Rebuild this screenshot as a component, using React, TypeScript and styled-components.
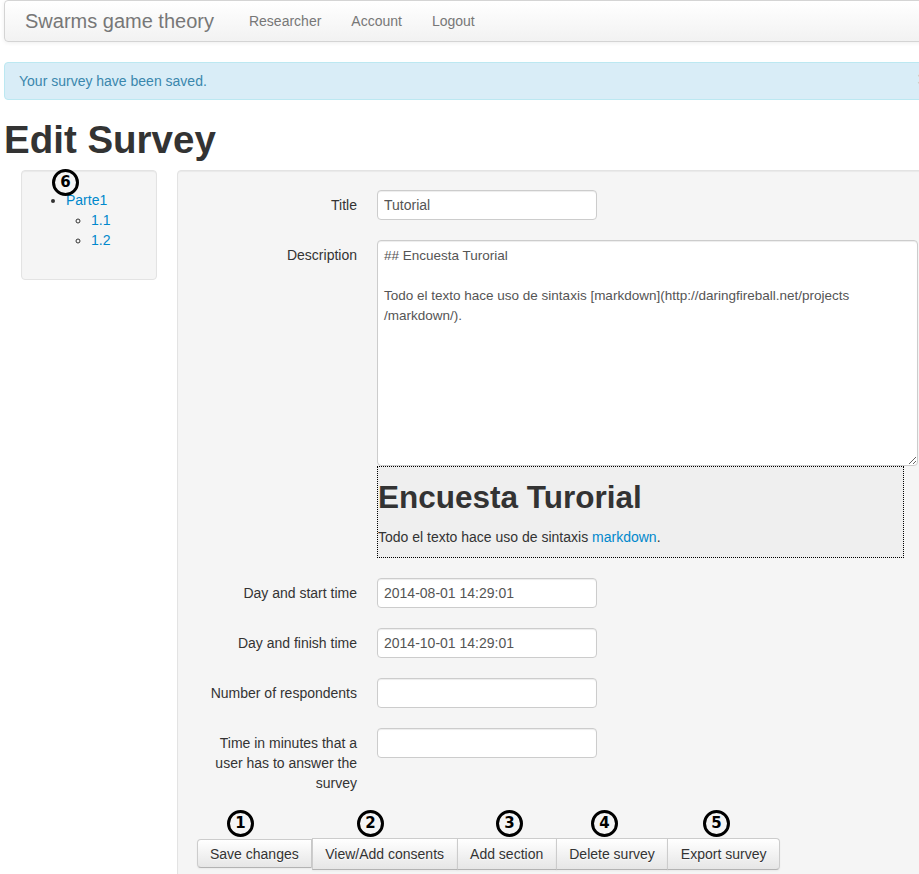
import React from "react";
import styled, { createGlobalStyle } from "styled-components";

const GlobalStyle = createGlobalStyle`
  html, body {
    margin: 0;
    padding: 0;
    overflow: hidden;
    background: #fff;
  }
  body {
    font-family: "Liberation Sans", Arial, sans-serif;
    font-size: 14px;
    line-height: 20px;
    color: #333;
  }
  * { box-sizing: content-box; }
`;

const Page = styled.div`
  width: 940px;
  padding-left: 4px;
`;

const Navbar = styled.nav`
  display: flex;
  align-items: center;
  height: 40px;
  padding-left: 20px;
  border: 1px solid #d4d4d4;
  border-radius: 4px;
  background: linear-gradient(#ffffff, #f2f2f2);
  box-shadow: 0 1px 4px rgba(0, 0, 0, 0.065);
  margin-bottom: 20px;
`;

const Brand = styled.a`
  font-size: 20px;
  line-height: 20px;
  color: #777;
  padding: 10px 20px 10px 0;
  text-decoration: none;
`;

const NavLink = styled.a`
  font-size: 14px;
  line-height: 20px;
  color: #777;
  padding: 10px 15px;
  text-decoration: none;
`;

const Alert = styled.div`
  display: flex;
  justify-content: space-between;
  padding: 8px 35px 8px 14px;
  background: #d9edf7;
  border: 1px solid #bce8f1;
  border-radius: 4px;
  color: #3a87ad;
  margin-bottom: 20px;
`;

const Close = styled.span`
  position: relative;
  top: -2px;
  margin-right: -21px;
  font-size: 20px;
  font-weight: bold;
  line-height: 20px;
  color: #000;
  opacity: 0.2;
`;

const Title = styled.h1`
  font-size: 38.5px;
  line-height: 40px;
  font-weight: bold;
  margin: 0 0 10px;
  color: #333;
`;

const Row = styled.div`
  display: flex;
  align-items: flex-start;
`;

const Well = styled.div`
  position: relative;
  padding: 19px;
  background: #f5f5f5;
  border: 1px solid #e3e3e3;
  border-radius: 4px;
  box-shadow: inset 0 1px 1px rgba(0, 0, 0, 0.05);
`;

const Sidebar = styled(Well)`
  flex: none;
  width: 96px;
  margin-left: 17px;
`;

const FormWell = styled(Well)`
  flex: 1;
  margin-left: 20px;
  padding-bottom: 40px;
`;

const Tree = styled.ul<{ $nested?: boolean }>`
  margin: ${(p) => (p.$nested ? "0 0 0 25px" : "0 0 10px 25px")};
  padding: 0;
  list-style: ${(p) => (p.$nested ? "circle" : "disc")};
  li { line-height: 20px; }
`;

const Link = styled.a`
  color: #0088cc;
  text-decoration: none;
`;

const ControlGroup = styled.div`
  display: flex;
  align-items: flex-start;
  margin-bottom: 20px;
`;

const Label = styled.label`
  flex: none;
  width: 160px;
  padding-top: 5px;
  text-align: right;
  color: #333;
`;

const Controls = styled.div`
  margin-left: 20px;
`;

const Input = styled.input`
  display: block;
  width: 206px;
  height: 20px;
  padding: 4px 6px;
  margin: 0;
  font-family: "Liberation Sans", Arial, sans-serif;
  font-size: 14px;
  line-height: 20px;
  color: #555;
  background: #fff;
  border: 1px solid #ccc;
  border-radius: 4px;
  box-shadow: inset 0 1px 1px rgba(0, 0, 0, 0.075);
  outline: none;
`;

const TextArea = styled.textarea`
  display: block;
  width: 527px;
  height: 216px;
  padding: 5px 6px 3px;
  margin: 0;
  font-family: "Liberation Sans", Arial, sans-serif;
  font-size: 13.5px;
  line-height: 20px;
  color: #555;
  background: #fff;
  border: 1px solid #ccc;
  border-radius: 4px;
  box-shadow: inset 0 1px 1px rgba(0, 0, 0, 0.075);
  outline: none;
  resize: both;
  overflow: hidden;
  white-space: pre-wrap;
`;

const Preview = styled.div`
  width: 525px;
  border: 1px dotted #000;
  background: #efefef;
`;

const PreviewHeading = styled.h2`
  font-size: 31.5px;
  line-height: 40px;
  font-weight: bold;
  margin: 10px 0;
  color: #333;
`;

const PreviewText = styled.p`
  margin: 0 0 10px;
`;

const ButtonRow = styled.div`
  position: relative;
  display: flex;
  align-items: flex-start;
  margin-top: 45px;
`;

const Button = styled.button<{ $first?: boolean; $last?: boolean; $joined?: boolean }>`
  margin: ${(p) => (p.$first ? "1px 0 0 0" : "0")};
  margin-left: ${(p) => (p.$joined ? "-1px" : "0")};
  height: ${(p) => (p.$first ? "27px" : "30px")};
  padding: 0 ${(p) => (p.$first ? "12px" : "12.5px")};
  font-family: "Liberation Sans", Arial, sans-serif;
  font-size: 14px;
  line-height: 20px;
  color: #333;
  text-shadow: 0 1px 1px rgba(255, 255, 255, 0.75);
  background: linear-gradient(#ffffff, #e6e6e6);
  border: 1px solid #ccc;
  border-bottom-color: #b3b3b3;
  border-radius: ${(p) =>
    p.$first ? "4px 0 0 4px" : p.$last ? "0 4px 4px 0" : "0"};
  box-shadow: inset 0 1px 0 rgba(255, 255, 255, 0.2), 0 1px 2px rgba(0, 0, 0, 0.05);
  cursor: pointer;
`;

const Mark = styled.span<{ $left: number; $top: number }>`
  position: absolute;
  left: ${(p) => p.$left}px;
  top: ${(p) => p.$top}px;
  width: 21px;
  height: 21px;
  border: 3px solid #000;
  border-radius: 50%;
  display: flex;
  align-items: center;
  justify-content: center;
  font-family: "DejaVu Sans", sans-serif;
  font-weight: bold;
  font-size: 15px;
  line-height: 1;
  color: #000;
`;

const description =
  "## Encuesta Turorial\n\nTodo el texto hace uso de sintaxis [markdown](http://daringfireball.net/projects\n/markdown/).";

const buttons = [
  { label: "Save changes", mark: "1", center: 241 },
  { label: "View/Add consents", mark: "2", center: 371 },
  { label: "Add section", mark: "3", center: 510 },
  { label: "Delete survey", mark: "4", center: 605 },
  { label: "Export survey", mark: "5", center: 717 },
];

export default function App() {
  return (
    <Page>
      <GlobalStyle />
      <Navbar>
        <Brand href="#">Swarms game theory</Brand>
        <NavLink href="#">Researcher</NavLink>
        <NavLink href="#">Account</NavLink>
        <NavLink href="#">Logout</NavLink>
      </Navbar>

      <Alert>
        <span>Your survey have been saved.</span>
        <Close>×</Close>
      </Alert>

      <Title>Edit Survey</Title>

      <Row>
        <Sidebar>
          <Mark $left={30} $top={-2}>6</Mark>
          <Tree>
            <li>
              <Link href="#">Parte1</Link>
              <Tree $nested>
                <li><Link href="#">1.1</Link></li>
                <li><Link href="#">1.2</Link></li>
              </Tree>
            </li>
          </Tree>
        </Sidebar>

        <FormWell>
          <ControlGroup>
            <Label>Title</Label>
            <Controls>
              <Input defaultValue="Tutorial" />
            </Controls>
          </ControlGroup>

          <ControlGroup>
            <Label>Description</Label>
            <Controls>
              <TextArea defaultValue={description} />
              <Preview>
                <PreviewHeading>Encuesta Turorial</PreviewHeading>
                <PreviewText>
                  Todo el texto hace uso de sintaxis <Link href="#">markdown</Link>.
                </PreviewText>
              </Preview>
            </Controls>
          </ControlGroup>

          <ControlGroup>
            <Label>Day and start time</Label>
            <Controls>
              <Input defaultValue="2014-08-01 14:29:01" />
            </Controls>
          </ControlGroup>

          <ControlGroup>
            <Label>Day and finish time</Label>
            <Controls>
              <Input defaultValue="2014-10-01 14:29:01" />
            </Controls>
          </ControlGroup>

          <ControlGroup>
            <Label>Number of respondents</Label>
            <Controls>
              <Input defaultValue="" />
            </Controls>
          </ControlGroup>

          <ControlGroup>
            <Label>Time in minutes that a user has to answer the survey</Label>
            <Controls>
              <Input defaultValue="" />
            </Controls>
          </ControlGroup>

          <ButtonRow>
            {buttons.map((b) => (
              <Mark key={b.mark} $left={b.center - 197 - 14} $top={-28}>
                {b.mark}
              </Mark>
            ))}
            {buttons.map((b, i) => (
              <Button
                key={b.label}
                $first={i === 0}
                $last={i === buttons.length - 1}
                $joined={i > 1}
              >
                {b.label}
              </Button>
            ))}
          </ButtonRow>
        </FormWell>
      </Row>
    </Page>
  );
}
